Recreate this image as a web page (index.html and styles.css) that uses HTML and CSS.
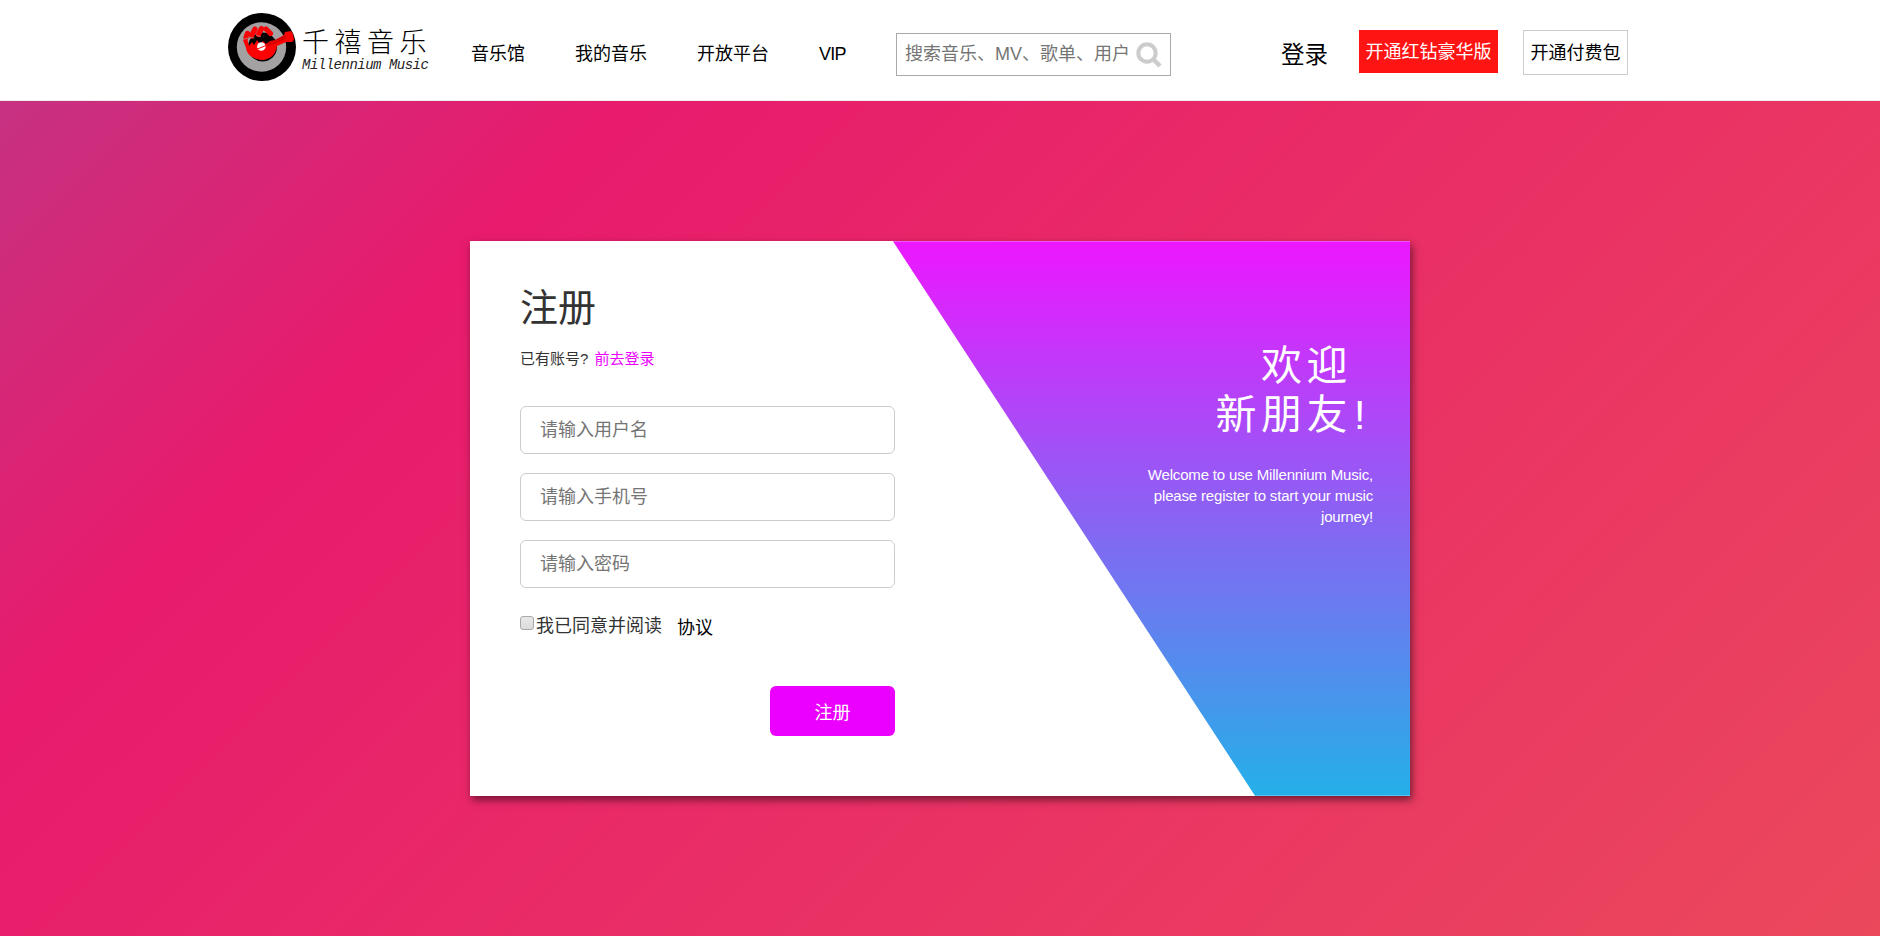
FILE: index.html
```html
<!DOCTYPE html>
<html lang="zh-CN">
<head>
    <meta charset="UTF-8">
    <meta name="viewport" content="width=device-width, initial-scale=1.0">
    <title>注册 - 千禧音乐</title>
    <link rel="stylesheet" href="styles.css">
</head>
<body>
    <header class="header">
        <a class="logo" href="#">
            <svg class="logo-icon" width="70" height="70" viewBox="0 0 70 70">
                <circle cx="34" cy="34" r="34" fill="#000"/>
                <circle cx="33.5" cy="34" r="24.7" fill="#a3a1a1"/>
                <!-- record -->
                <circle cx="34.5" cy="34" r="14.5" fill="#000"/>
                <!-- guitar -->
                <path d="M15 27L19 25L21 33L24 29L26 32L29 27L32 31L35 28L38 31L42 28L47 27L56 22L57 19L63 18L65 21L66 27L64 29L58 29L49 33C48 42 41 47 34 47C25 46 19 42 18 35Z" fill="#fb0204"/>
                <!-- fingers -->
                <path d="M19.500 20.500l-1.500 4M27 16l-3.500 7M33.500 15.500l-3 6M38 16l4.500 4.500" fill="none" stroke="#fb0204" stroke-width="5.200" stroke-linecap="round"/>
                <path d="M16.500 26l5-1M20.500 24l6 1M28 22l5 2" fill="none" stroke="#a3a1a1" stroke-width=".7"/>
                <circle cx="33.3" cy="33.5" r="4.3" fill="#fff"/>
                <path d="M27 37l32-13" stroke="#fb0204" stroke-width="1"/>
                <path d="M38 31l20-8M39 33l19-8" stroke="#8c0000" stroke-width=".6"/>
            </svg>
            <span class="logo-text">
                <span class="logo-cn">千禧音乐</span>
                <span class="logo-en">Millennium Music</span>
            </span>
        </a>
        <nav class="nav">
            <a href="#">音乐馆</a>
            <a href="#">我的音乐</a>
            <a href="#">开放平台</a>
            <a href="#">VIP</a>
        </nav>
        <div class="search">
            <input type="text" placeholder="搜索音乐、MV、歌单、用户">
            <svg width="26" height="26" viewBox="0 0 26 26">
                <circle cx="11" cy="11" r="8.7" fill="none" stroke="#ccc" stroke-width="4"/>
                <path d="M17 17l7 7" stroke="#ccc" stroke-width="4.5"/>
            </svg>
        </div>
        <a class="login" href="#">登录</a>
        <a class="vip-button" href="#">开通红钻豪华版</a>
        <a class="pay-button" href="#">开通付费包</a>
    </header>

    <main class="main">
        <div class="card">
            <form class="form">
                <h1>注册</h1>
                <p class="tip">已有账号? <a href="#">前去登录</a></p>
                <input class="field" type="text" placeholder="请输入用户名">
                <input class="field" type="text" placeholder="请输入手机号">
                <input class="field" type="password" placeholder="请输入密码">
                <div class="agree">
                    <input type="checkbox" id="agree">
                    <label for="agree">我已同意并阅读</label>
                    <a href="#">协议</a>
                </div>
                <button class="submit" type="button">注册</button>
            </form>
            <div class="welcome">
                <h2><span class="hello">欢迎</span><br>新朋友<span class="mark">!</span></h2>
                <p>Welcome to use Millennium Music, please register to start your music journey!</p>
            </div>
        </div>
    </main>
</body>
</html>
```
FILE: styles.css
```css
* {
    box-sizing: border-box;
    margin: 0;
    padding: 0;
}

body {
    display: flex;
    flex-direction: column;
    height: 100vh;
    overflow: hidden;
    font-family: "Liberation Sans", "Noto Sans CJK SC", sans-serif;
    font-size: 18px;
    color: #333;
    background: linear-gradient(135deg, #c13584 0%, #e81b6d 25.5%, #eb485c 100%);
}

a {
    color: #000;
    text-decoration: none;
}

/* header */
.header {
    display: flex;
    align-items: flex-start;
    height: 101px;
    padding-left: 228px;
    background: #fff;
    border-bottom: 1px solid #eee;
    white-space: nowrap;
}

.logo {
    display: flex;
    width: 243px;
    padding-top: 13px;
}

.logo-icon {
    flex: none;
}

.logo-text {
    display: flex;
    flex-direction: column;
    margin: 15px 0 0 4px;
}

.logo-cn {
    font-size: 27px;
    font-weight: 300;
    line-height: 31px;
    letter-spacing: 5.5px;
}

.logo-en {
    font-family: "Liberation Mono", monospace;
    font-size: 14px;
    font-style: italic;
    line-height: 12px;
    letter-spacing: -0.5px;
    color: #222;
}

.nav {
    display: flex;
    gap: 50px;
    width: 425px;
    line-height: 26px;
    padding-top: 41px;
}

.nav a:last-child {
    letter-spacing: -0.7px;
}

.search {
    display: flex;
    align-items: center;
    width: 275px;
    height: 43px;
    margin-top: 33px;
    padding: 0 8px;
    border: 1px solid #a9a9a9;
}

.search input {
    width: 231px;
    border: none;
    outline: none;
    font: inherit;
}

.search input::placeholder,
.field::placeholder {
    color: #757575;
}

.search svg {
    flex: none;
}

.login {
    margin: 38px 0 0 110px;
    font-size: 23.5px;
    line-height: 34px;
}

.vip-button {
    width: 139px;
    height: 43px;
    margin: 30px 0 0 31px;
    background: #ff1414;
    color: #fff;
    line-height: 45px;
    text-align: center;
}

.pay-button {
    width: 105px;
    height: 45px;
    margin: 30px 0 0 25px;
    border: 1px solid #ccc;
    line-height: 45px;
    text-align: center;
}

/* register */
.main {
    flex: 1;
    padding-top: 140px;
}

.card {
    display: flex;
    justify-content: space-between;
    width: 940px;
    height: 555px;
    margin: 0 auto;
    padding: 0 37px 0 50px;
    background: #fff;
    box-shadow: 2px 4px 8px rgba(0, 0, 0, 0.5);
    position: relative;
}

.card::before {
    content: "";
    position: absolute;
    inset: 0;
    background: linear-gradient(to bottom, #ed17ff, #24b0e8);
    clip-path: polygon(423px 0.3px, 100% 0.3px, 100% 554.7px, 785px 554.7px);
}

.form {
    display: flex;
    flex-direction: column;
    width: 375px;
    padding-top: 40px;
    position: relative;
}

.form h1 {
    font-size: 38px;
    font-weight: 400;
    line-height: 54px;
}

.tip {
    margin: 11px 0 35px;
    font-size: 15px;
    line-height: 25px;
}

.tip a {
    margin-left: 2px;
    color: #eb00ff;
}

.field {
    height: 48px;
    margin-bottom: 19px;
    padding: 0 19px;
    border: 1px solid #ccc;
    border-radius: 6px;
    font: inherit;
}

.agree {
    display: flex;
    align-items: flex-start;
    margin-top: 5px;
    line-height: 28px;
}

.agree input {
    appearance: none;
    width: 14px;
    height: 14px;
    margin: 4px 2px 0 0;
    background: linear-gradient(#e8e8e8, #dcdcdc);
    border: 1px solid #a9a9a9;
    border-radius: 3px;
}

.agree a {
    margin: 2px 0 0 15px;
}

.submit {
    align-self: flex-end;
    width: 125px;
    height: 50px;
    margin-top: 44px;
    border: none;
    border-radius: 6px;
    background: #eb00ff;
    color: #fff;
    font: inherit;
}

.welcome {
    width: 230px;
    padding-top: 101px;
    position: relative;
    color: #fff;
    text-align: right;
}

.welcome h2 {
    font-size: 41px;
    font-weight: 400;
    line-height: 49px;
    letter-spacing: 4.5px;
    white-space: nowrap;
}

.hello {
    margin-right: 21px;
}

.mark {
    margin: 0 3px 0 2px;
}

.welcome p {
    margin-top: 24px;
    font-size: 15px;
    line-height: 21px;
    letter-spacing: -0.17px;
}
```
